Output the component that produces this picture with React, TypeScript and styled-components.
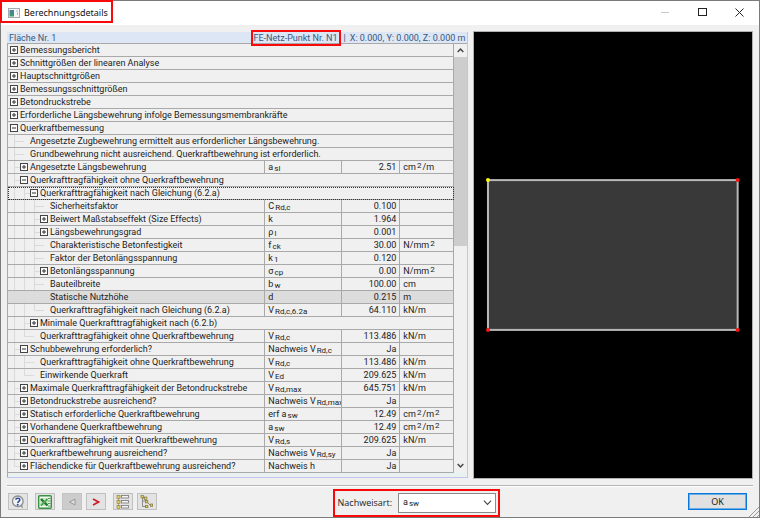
import React, { useState } from "react";
import styled, { createGlobalStyle, css } from "styled-components";

const GlobalStyle = createGlobalStyle`
  *, *::before, *::after { box-sizing: border-box; }
  html, body { margin: 0; padding: 0; }
  body { font-family: Roboto, "Liberation Sans", sans-serif; font-size: 9px; line-height: 11px; color: #222; }
  button, select { font: inherit; color: inherit; }
`;

const frame = css`
  position: relative;
  z-index: 1;
  outline: 2px solid #f90a0a;
`;

const Window = styled.div`
  display: flex;
  flex-direction: column;
  min-height: 100vh;
  background: #f0f0f0;
  border: 1px solid #7b7b7b;
`;

const TitleBar = styled.header`
  display: flex;
  align-items: flex-start;
  justify-content: space-between;
  height: 24px;
  padding: 1px;
  background: #fff;
`;

const TitleMark = styled.div`
  display: flex;
  align-items: center;
  gap: 4px;
  height: 19px;
  padding: 2px 3px 0 6px;
  ${frame}
`;

const Title = styled.h1`
  margin: 0;
  font-family: "Noto Sans", "Open Sans", sans-serif;
  font-size: 9px;
  font-weight: 400;
  line-height: 12px;
  color: #111;
`;

const WindowButtons = styled.div`
  display: flex;
`;

const WindowButton = styled.button`
  display: grid;
  place-items: center;
  width: 37px;
  height: 21px;
  padding: 0;
  border: 0;
  background: none;
`;

const Main = styled.main`
  display: flex;
  flex: 1;
  gap: 6px;
  padding: 7px 7px 7px 6px;
`;

const Details = styled.section`
  display: flex;
  flex: 461 1 0;
  flex-direction: column;
  min-width: 0;
  border-right: 1px solid #c3c3ee;
  border-bottom: 1px solid #c3c3ee;
  background: #eaf1f1;
`;

const DetailsHeader = styled.div`
  display: flex;
  justify-content: space-between;
  height: 12px;
  padding: 0 2px 0 2px;
  line-height: 12px;
  color: #36597f;
  background: #dce6f5;
  border-bottom: 1px solid #a9a9a9;
`;

const PointInfo = styled.div`
  display: flex;
  gap: 4px;
`;

const PointMark = styled.span`
  height: 12px;
  padding: 0 1px;
  margin-right: 1px;
  ${frame}
`;

const Scroller = styled.div`
  display: flex;
  flex: 1;
  border-left: 1px solid #a9a9a9;
`;

const TableArea = styled.div`
  flex: 1;
  min-width: 0;
`;

const Table = styled.table`
  width: 100%;
  table-layout: fixed;
  border-collapse: separate;
  border-spacing: 0;
  background: #f0f0f0;
`;

const NameCol = styled.col``;
const SymbolCol = styled.col`
  width: 77px;
`;
const ValueCol = styled.col`
  width: 58px;
`;
const UnitCol = styled.col`
  width: 54px;
`;

const Row = styled.tr<{ $selected?: boolean; $focused?: boolean }>`
  ${(p) => p.$selected && "background: #dcdcdc;"}
  ${(p) => p.$focused && "outline: 1px dotted #333; outline-offset: -1px;"}
`;

const Cell = styled.td<{ $align?: "right" }>`
  height: 13px;
  padding: 0 3px;
  overflow: hidden;
  white-space: nowrap;
  vertical-align: middle;
  text-align: ${(p) => p.$align ?? "left"};
  border-right: 1px solid #a9a9a9;
  border-bottom: 1px solid #a9a9a9;
`;

const NameCell = styled(Cell)`
  padding: 0 0 0 2px;
`;

const NameLine = styled.div`
  display: flex;
  align-items: center;
  height: 12px;
`;

const GuideSvg = styled.svg`
  flex: none;
  width: 10px;
  height: 13px;
`;

const Toggle = styled.button`
  flex: none;
  width: 10px;
  height: 8px;
  padding: 0;
  border: 0;
  background: none;

  svg { display: block; }
`;

const Formula = styled.span`
  display: block;
  height: 11px;
  line-height: 11px;
`;

const Sub = styled.sub`
  position: relative;
  top: 1px;
  margin-left: 1px;
  font-size: 8px;
  line-height: 8px;
  vertical-align: baseline;
`;

const Sup = styled.sup`
  position: relative;
  bottom: 2px;
  margin: 0 1px;
  font-size: 8px;
  line-height: 8px;
  vertical-align: baseline;
`;

const ScrollBar = styled.div`
  display: flex;
  flex-direction: column;
  width: 13px;
  margin-bottom: 5px;
  background: #f0f0f0;
`;

const ScrollButton = styled.button`
  display: grid;
  place-items: center;
  height: 13px;
  padding: 0;
  border: 0;
  background: none;
`;

const ScrollTrack = styled.div`
  display: flex;
  flex: 1;
  flex-direction: column;
`;

const ScrollThumb = styled.div`
  flex: 0 0 47%;
  background: #cdcdcd;
`;

const Preview = styled.section`
  display: flex;
  flex: 278 1 0;
  min-width: 0;
  background: #000;
  outline: 1px solid #b0b0b0;

  svg { flex: 1; width: 100%; height: auto; min-width: 0; }
`;

const Footer = styled.footer`
  display: flex;
  align-items: center;
  height: 32px;
  margin: 0 6px;
  padding-right: 6px;
  border-top: 1px solid #b4b4b4;
  box-shadow: inset 0 1px #fff;
`;

const Toolbar = styled.div`
  display: flex;
  gap: 7px;
  padding-left: 1px;
`;

const ToolGroup = styled.div`
  display: flex;
  gap: 4px;
`;

const ToolButton = styled.button`
  display: grid;
  place-items: center;
  width: 20px;
  height: 17px;
  padding: 0;
  border: 1px solid #c0c0c0;
  background: #e3e3e3;

  &:disabled { background: #cccccc; border-color: #c4c4c4; }
`;

const ProofType = styled.div`
  display: flex;
  align-items: center;
  gap: 6px;
  height: 24px;
  margin: 2px auto 0 24%;
  padding: 0 2px 0 3px;
  font-family: "Open Sans", "Noto Sans", sans-serif;
  ${frame}
`;

const SelectBox = styled.div`
  display: grid;
  align-items: center;
  width: 98px;
  height: 20px;
  border: 1px solid #8a8a8a;
  background: #fff;

  > * { grid-area: 1 / 1; }
`;

const Select = styled.select`
  width: 100%;
  height: 100%;
  border: 0;
  appearance: none;
  color: transparent;
  background: none;

  option { color: #222; }
`;

const SelectFace = styled.div`
  display: flex;
  align-items: center;
  justify-content: space-between;
  padding: 0 3px 0 4px;
  pointer-events: none;
  font-family: Roboto, sans-serif;
`;

const OkButton = styled.button`
  width: 59px;
  height: 17px;
  padding: 0;
  border: 1px solid #0b78d7;
  box-shadow: inset 0 0 0 1px #6aaee8;
  background: #e1e1e1;
  font-family: "Noto Sans", sans-serif;
`;

const Grip = styled.svg`
  position: fixed;
  right: 1px;
  bottom: 1px;
`;

type Kind = "open" | "closed" | "leaf" | "last";
type Entry = {
  kind: Kind;
  name: string;
  symbol?: string;
  value?: string;
  unit?: string;
  selected?: boolean;
  focused?: boolean;
  guides?: string;
};

// guides: one letter per ancestor column; t = branch, i = line, l = corner
const rows: Entry[] = [
  { kind: "closed", name: "Bemessungsbericht" },
  { kind: "closed", name: "Schnittgrößen der linearen Analyse" },
  { kind: "closed", name: "Hauptschnittgrößen" },
  { kind: "closed", name: "Bemessungsschnittgrößen" },
  { kind: "closed", name: "Betondruckstrebe" },
  { kind: "closed", name: "Erforderliche Längsbewehrung infolge Bemessungsmembrankräfte" },
  { kind: "open", name: "Querkraftbemessung" },
  { kind: "leaf", guides: "t", name: "Angesetzte Zugbewehrung ermittelt aus erforderlicher Längsbewehrung." },
  { kind: "leaf", guides: "t", name: "Grundbewehrung nicht ausreichend. Querkraftbewehrung ist erforderlich." },
  { kind: "closed", guides: "t", name: "Angesetzte Längsbewehrung", symbol: "a_sl", value: "2.51", unit: "cm^2/m" },
  { kind: "open", guides: "t", name: "Querkrafttragfähigkeit ohne Querkraftbewehrung" },
  { kind: "open", guides: "it", name: "Querkrafttragfähigkeit nach Gleichung (6.2.a)", focused: true },
  { kind: "leaf", guides: "iit", name: "Sicherheitsfaktor", symbol: "C_Rd,c", value: "0.100", unit: "" },
  { kind: "closed", guides: "iit", name: "Beiwert Maßstabseffekt (Size Effects)", symbol: "k", value: "1.964", unit: "" },
  { kind: "closed", guides: "iit", name: "Längsbewehrungsgrad", symbol: "ρ_l", value: "0.001", unit: "" },
  { kind: "leaf", guides: "iit", name: "Charakteristische Betonfestigkeit", symbol: "f_ck", value: "30.00", unit: "N/mm^2" },
  { kind: "leaf", guides: "iit", name: "Faktor der Betonlängsspannung", symbol: "k_1", value: "0.120", unit: "" },
  { kind: "closed", guides: "iit", name: "Betonlängsspannung", symbol: "σ_cp", value: "0.00", unit: "N/mm^2" },
  { kind: "leaf", guides: "iit", name: "Bauteilbreite", symbol: "b_w", value: "100.00", unit: "cm" },
  { kind: "leaf", guides: "iit", name: "Statische Nutzhöhe", symbol: "d", value: "0.215", unit: "m", selected: true },
  { kind: "last", guides: "iil", name: "Querkrafttragfähigkeit nach Gleichung (6.2.a)", symbol: "V_Rd,c,6.2a", value: "64.110", unit: "kN/m" },
  { kind: "closed", guides: "it", name: "Minimale Querkrafttragfähigkeit nach (6.2.b)" },
  { kind: "last", guides: "il", name: "Querkrafttragfähigkeit ohne Querkraftbewehrung", symbol: "V_Rd,c", value: "113.486", unit: "kN/m" },
  { kind: "open", guides: "t", name: "Schubbewehrung erforderlich?", symbol: "Nachweis V_Rd,c", value: "Ja", unit: "" },
  { kind: "leaf", guides: "it", name: "Querkrafttragfähigkeit ohne Querkraftbewehrung", symbol: "V_Rd,c", value: "113.486", unit: "kN/m" },
  { kind: "last", guides: "il", name: "Einwirkende Querkraft", symbol: "V_Ed", value: "209.625", unit: "kN/m" },
  { kind: "closed", guides: "t", name: "Maximale Querkrafttragfähigkeit der Betondruckstrebe", symbol: "V_Rd,max", value: "645.751", unit: "kN/m" },
  { kind: "closed", guides: "t", name: "Betondruckstrebe ausreichend?", symbol: "Nachweis V_Rd,max", value: "Ja", unit: "" },
  { kind: "closed", guides: "t", name: "Statisch erforderliche Querkraftbewehrung", symbol: "erf a_sw", value: "12.49", unit: "cm^2/m^2" },
  { kind: "closed", guides: "t", name: "Vorhandene Querkraftbewehrung", symbol: "a_sw", value: "12.49", unit: "cm^2/m^2" },
  { kind: "closed", guides: "t", name: "Querkrafttragfähigkeit mit Querkraftbewehrung", symbol: "V_Rd,s", value: "209.625", unit: "kN/m" },
  { kind: "closed", guides: "t", name: "Querkraftbewehrung ausreichend?", symbol: "Nachweis V_Rd,sy", value: "Ja", unit: "" },
  { kind: "closed", guides: "l", name: "Flächendicke für Querkraftbewehrung ausreichend?", symbol: "Nachweis h", value: "Ja", unit: "" },
];

const guidePaths: Record<string, string> = {
  i: "M4.5 0V13",
  t: "M4.5 0V13M4.5 6.5H10",
  l: "M4.5 0V6.5H10",
  h: "M0 6.5H4",
};

function Guide({ shape }: { shape: string }) {
  return (
    <GuideSvg viewBox="0 0 10 13" aria-hidden="true">
      <path d={guidePaths[shape]} fill="none" stroke="#dadada" />
    </GuideSvg>
  );
}

function Expander({ open, name }: { open: boolean; name: string }) {
  return (
    <Toggle type="button" aria-expanded={open} aria-label={name}>
      <svg width="8" height="8" viewBox="0 0 8 8">
        <rect x="0.5" y="0.5" width="7" height="7" fill="#fafafa" stroke="#444" />
        <path d={open ? "M2 4H6" : "M2 4H6M4 2V6"} stroke="#333" />
      </svg>
    </Toggle>
  );
}

function SymbolText({ text }: { text: string }) {
  const [base, index] = text.split("_");
  return (
    <Formula>
      {base}
      {index && <Sub>{index}</Sub>}
    </Formula>
  );
}

function UnitText({ text }: { text: string }) {
  return (
    <Formula>
      {text.split(/(\^2)/).map((part, i) => (part === "^2" ? <Sup key={i}>2</Sup> : part))}
    </Formula>
  );
}

function DetailRow({ row }: { row: Entry }) {
  const spans = row.symbol === undefined;
  return (
    <Row $selected={row.selected} $focused={row.focused}>
      <NameCell colSpan={spans ? 4 : 1}>
        <NameLine>
          {(row.guides ?? "").split("").map((g, i) => (
            <Guide key={i} shape={g} />
          ))}
          {row.kind === "leaf" || row.kind === "last" ? (
            <Guide shape="h" />
          ) : (
            <Expander open={row.kind === "open"} name={row.name} />
          )}
          {row.name}
        </NameLine>
      </NameCell>
      {!spans && (
        <>
          <Cell><SymbolText text={row.symbol ?? ""} /></Cell>
          <Cell $align="right">{row.value}</Cell>
          <Cell><UnitText text={row.unit ?? ""} /></Cell>
        </>
      )}
    </Row>
  );
}

function HelpIcon() {
  return (
    <svg width="14" height="14" viewBox="0 0 14 14">
      <path d="M8.5 10.5L12 13.5L11 9.5" fill="#8a8a8a" />
      <circle cx="6.8" cy="6.3" r="5.3" fill="#f2f4f8" stroke="#8c8c8c" strokeWidth="1.3" />
      <path d="M4.8 4.8C5 2.6 9 2.7 8.8 5C8.7 6.3 7 6.4 6.8 8" fill="none" stroke="#2d4f9c" strokeWidth="1.6" />
      <circle cx="6.7" cy="9.8" r="1" fill="#2d4f9c" />
    </svg>
  );
}

function ExcelIcon() {
  return (
    <svg width="14" height="14" viewBox="0 0 14 14">
      <rect x="0.7" y="0.7" width="12.6" height="12.6" rx="1" fill="#f1f8ef" stroke="#3a9142" strokeWidth="1.4" />
      <rect x="2" y="3" width="8" height="8" fill="#cfe6cc" />
      <path d="M3 4L9.5 10.5" stroke="#1f7a2c" strokeWidth="2.4" />
      <path d="M9.5 4L3 10.5" stroke="#4fa957" strokeWidth="2" />
      <path d="M10 3.5H12.5M10 6H12.5M10 8.5H12.5M10 11H12.5" stroke="#3a9142" strokeWidth="0.9" />
    </svg>
  );
}

function ListIcon() {
  return (
    <svg width="14" height="14" viewBox="0 0 14 14">
      <path d="M2.5 2V12" stroke="#888" strokeWidth="0.7" />
      {[0, 5, 10].map((y) => (
        <g key={y}>
          <rect x="1" y={y + 0.5} width="3" height="3" fill="#e4ce55" stroke="#8a7b33" strokeWidth="0.6" />
          <rect x="5.5" y={y + 0.5} width="7" height="2.5" fill="#f4f4f4" stroke="#777" strokeWidth="0.8" />
        </g>
      ))}
    </svg>
  );
}

function TreeIcon() {
  return (
    <svg width="14" height="14" viewBox="0 0 14 14">
      <path d="M2.5 2V11.5H7M2.5 3H5M3 6H6M6 6L11 11" fill="none" stroke="#777" strokeWidth="0.8" />
      {[[1, 0.5], [4.5, 2], [5.5, 5.5], [5.5, 10.3], [10.3, 9]].map(([x, y]) => (
        <rect key={`${x}-${y}`} x={x} y={y} width="2.4" height="2.4" fill="#e4ce55" stroke="#756a35" strokeWidth="0.6" />
      ))}
    </svg>
  );
}

function Chevron({ down, color = "#444", size = 7 }: { down?: boolean; color?: string; size?: number }) {
  return (
    <svg width={size} height={size} viewBox="0 0 7 7">
      <path d={down ? "M0.7 2L3.5 5L6.3 2" : "M0.7 5L3.5 2L6.3 5"} fill="none" stroke={color} strokeWidth={size > 7 ? 0.8 : 1.5} />
    </svg>
  );
}

export default function App() {
  const [proof, setProof] = useState("asw");
  return (
    <>
      <GlobalStyle />
      <Window>
        <TitleBar>
          <TitleMark>
            <svg width="12" height="10" viewBox="0 0 12 10">
              <defs>
                <linearGradient id="pane" x2="0" y2="1">
                  <stop stopColor="#4a7fa8" />
                  <stop offset="1" stopColor="#3f9a68" />
                </linearGradient>
              </defs>
              <rect x="0.5" y="0.5" width="11" height="9" fill="#f4f6f7" stroke="#a4aaae" />
              <rect x="1.5" y="2" width="4.5" height="6.5" fill="url(#pane)" />
              <path d="M8 3H10M9.5 4.5V7" stroke="#b4b9bc" />
            </svg>
            <Title>Berechnungsdetails</Title>
          </TitleMark>
          <WindowButtons>
            <WindowButton type="button" aria-label="Minimieren" disabled>
              <svg width="9" height="9" viewBox="0 0 9 9"><path d="M0 4.5H8" stroke="#c9c9c9" /></svg>
            </WindowButton>
            <WindowButton type="button" aria-label="Maximieren">
              <svg width="9" height="9" viewBox="0 0 9 9"><rect x="0.5" y="0.5" width="8" height="7" fill="none" stroke="#222" /></svg>
            </WindowButton>
            <WindowButton type="button" aria-label="Schließen">
              <svg width="9" height="9" viewBox="0 0 9 9"><path d="M0.5 0.5L8.5 8.5M8.5 0.5L0.5 8.5" stroke="#222" /></svg>
            </WindowButton>
          </WindowButtons>
        </TitleBar>

        <Main>
          <Details>
            <DetailsHeader>
              <span>Fläche Nr. 1</span>
              <PointInfo>
                <PointMark>FE-Netz-Punkt Nr. N1</PointMark>
                <span>|</span>
                <span>X: 0.000, Y: 0.000, Z: 0.000 m</span>
              </PointInfo>
            </DetailsHeader>
            <Scroller>
              <TableArea>
                <Table>
                  <colgroup>
                    <NameCol />
                    <SymbolCol />
                    <ValueCol />
                    <UnitCol />
                  </colgroup>
                  <tbody>
                    {rows.map((row, i) => (
                      <DetailRow key={i} row={row} />
                    ))}
                  </tbody>
                </Table>
              </TableArea>
              <ScrollBar>
                <ScrollButton type="button" aria-label="Nach oben"><Chevron /></ScrollButton>
                <ScrollTrack><ScrollThumb /></ScrollTrack>
                <ScrollButton type="button" aria-label="Nach unten"><Chevron down /></ScrollButton>
              </ScrollBar>
            </Scroller>
          </Details>

          <Preview aria-label="Fläche">
            <svg viewBox="0 0 278 446">
              <rect x="14" y="148" width="250" height="150" fill="#393939" stroke="#b8b8b8" strokeWidth="2" />
              <circle cx="14" cy="148" r="2" fill="#ffff00" />
              <circle cx="264" cy="148" r="2" fill="#ff1010" />
              <circle cx="14" cy="298" r="2" fill="#ff1010" />
              <circle cx="264" cy="298" r="2" fill="#ff1010" />
            </svg>
          </Preview>
        </Main>

        <Footer>
          <Toolbar>
            <ToolButton type="button" aria-label="Hilfe"><HelpIcon /></ToolButton>
            <ToolButton type="button" aria-label="Excel"><ExcelIcon /></ToolButton>
            <ToolGroup>
              <ToolButton type="button" aria-label="Zurück" disabled>
                <svg width="8" height="8" viewBox="0 0 8 8"><path d="M7 1L1.5 4L7 7Z" fill="#dedede" stroke="#999" /></svg>
              </ToolButton>
              <ToolButton type="button" aria-label="Weiter">
                <svg width="8" height="8" viewBox="0 0 8 8"><path d="M1 1L6.5 4L1 7" fill="none" stroke="#d01f2b" strokeWidth="1.7" /></svg>
              </ToolButton>
            </ToolGroup>
            <ToolGroup>
              <ToolButton type="button" aria-label="Liste"><ListIcon /></ToolButton>
              <ToolButton type="button" aria-label="Baum"><TreeIcon /></ToolButton>
            </ToolGroup>
          </Toolbar>
          <ProofType>
            <label htmlFor="proof">Nachweisart:</label>
            <SelectBox>
              <Select id="proof" value={proof} onChange={(e) => setProof(e.target.value)}>
                <option value="asw">a sw</option>
              </Select>
              <SelectFace aria-hidden="true">
                <SymbolText text="a_sw" />
                <Chevron down size={9} />
              </SelectFace>
            </SelectBox>
          </ProofType>
          <OkButton type="button">OK</OkButton>
        </Footer>
        <Grip width="10" height="10" viewBox="0 0 10 10" aria-hidden="true">
          <path d="M0 10L10 0M4 10L10 4M8 10L10 8" stroke="#9a9a9a" />
        </Grip>
      </Window>
    </>
  );
}
